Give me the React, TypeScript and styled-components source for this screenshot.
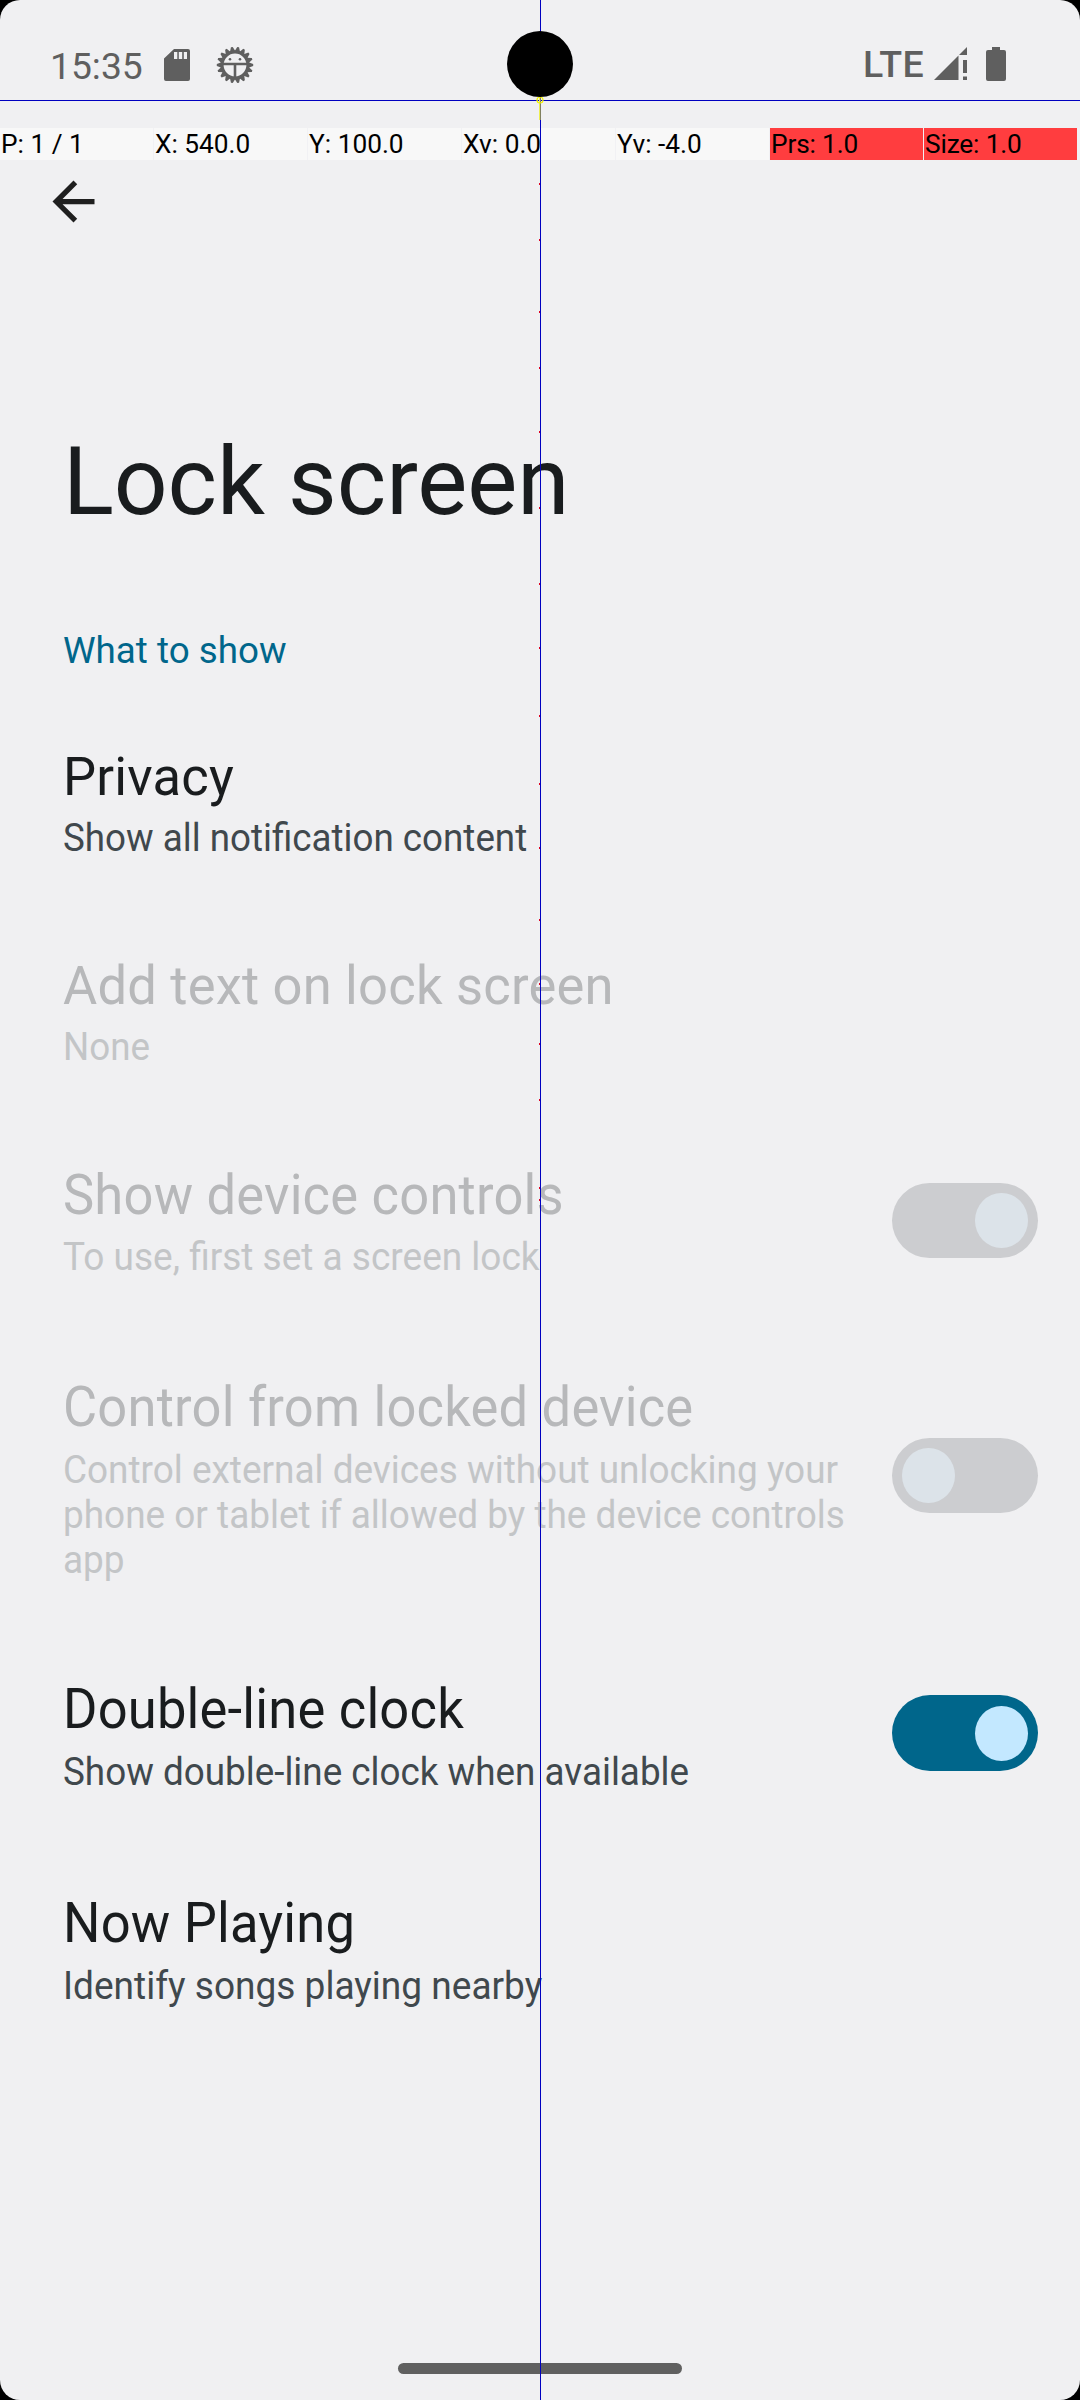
import React from 'react';
import styled, { createGlobalStyle } from 'styled-components';

const GlobalStyle = createGlobalStyle`
  html, body { margin: 0; padding: 0; background: #000; }
  * { box-sizing: border-box; }
`;

const Screen = styled.div`
  position: relative;
  width: 1080px;
  height: 2400px;
  overflow: hidden;
  display: flex;
  flex-direction: column;
  background: #f0f0f2;
  border-radius: 20px;
  font-family: Roboto, 'Noto Sans', sans-serif;
`;

const StatusBar = styled.header`
  display: flex;
  justify-content: space-between;
  height: 128px;
  flex: none;
  color: #5f5f5f;
`;

const StatusGroup = styled.div<{ $end?: boolean }>`
  display: flex;
  align-items: center;
  height: 132px;
  padding: ${p => (p.$end ? '0 74px 0 0' : '0 0 0 50px')};
`;

const Clock = styled.span`
  font-size: 37.25px;
  line-height: 44px;
  width: 111px;
`;

const Network = styled.span`
  font-size: 37.5px;
  line-height: 44px;
  font-weight: 500;
  letter-spacing: 0.4px;
  margin-top: -4px;
  margin-right: 10px;
`;

const Glyph = styled.svg<{ $gap?: number; $lift?: number }>`
  display: block;
  flex: none;
  margin-left: ${p => p.$gap ?? 0}px;
  margin-bottom: ${p => p.$lift ?? 0}px;
`;

const PointerBar = styled.div`
  display: flex;
  gap: 1px;
  height: 32px;
  flex: none;
  background: #f1f1f4;
`;

const PointerCell = styled.div<{ $alert?: boolean }>`
  width: 153px;
  flex: none;
  padding-left: 1px;
  background: ${p => (p.$alert ? '#ff3d3f' : '#f8f8f8')};
  color: #000;
  font-size: 26.25px;
  line-height: 32px;
  letter-spacing: ${p => (p.$alert ? '-0.15px' : 'normal')};
  white-space: nowrap;
`;

const Toolbar = styled.nav`
  display: flex;
  height: 250px;
  flex: none;
  padding: 10px 42px;
`;

const BackButton = styled.button`
  display: flex;
  align-items: center;
  justify-content: center;
  width: 63px;
  height: 63px;
  padding: 0;
  border: 0;
  background: none;
`;

const Title = styled.h1`
  margin: 0;
  padding-left: 63px;
  height: 216px;
  flex: none;
  font-size: 94.5px;
  line-height: 143px;
  letter-spacing: -0.1px;
  font-weight: 400;
  color: #191c1e;
`;

const Category = styled.h2`
  margin: 0;
  padding-left: 63px;
  height: 118px;
  flex: none;
  font-size: 36.75px;
  line-height: 49px;
  font-weight: 400;
  color: #00668b;
`;

const Preference = styled.section<{ $height: number; $disabled?: boolean }>`
  display: flex;
  justify-content: space-between;
  align-items: flex-start;
  height: ${p => p.$height}px;
  flex: none;
  padding: 0 42px 0 63px;
  color: ${p => (p.$disabled ? '#b7b8ba' : '#191c1e')};
`;

const PreferenceText = styled.div<{ $stretch: number }>`
  display: flex;
  flex-direction: column;
  transform: scaleY(${p => p.$stretch});
  transform-origin: 0 0;
`;

const Label = styled.div`
  font-size: 52.5px;
  line-height: 62px;
  letter-spacing: 0.2px;
  white-space: nowrap;
`;

const Summary = styled.div<{ $disabled?: boolean; $size?: number }>`
  font-size: ${p => p.$size ?? 36.75}px;
  line-height: 42.8px;
  white-space: pre;
  margin-top: 8.2px;
  color: ${p => (p.$disabled ? '#c3c5c7' : '#40484d')};
`;

const Switch = styled.div<{ $on: boolean; $disabled?: boolean; $top: number; $height: number }>`
  display: flex;
  align-items: center;
  justify-content: ${p => (p.$on ? 'flex-end' : 'flex-start')};
  width: 146px;
  height: ${p => p.$height}px;
  flex: none;
  margin-top: ${p => p.$top}px;
  padding: 0 10px;
  border-radius: 38px;
  background: ${p => (p.$disabled ? '#cccdd0' : '#00668b')};
`;

const Thumb = styled.span<{ $disabled?: boolean }>`
  width: 53px;
  height: 55px;
  border-radius: 50%;
  background: ${p => (p.$disabled ? '#dce3e9' : '#c3e8ff')};
`;

const HomeHandle = styled.div`
  width: 284px;
  height: 11px;
  margin: auto auto 26px;
  border-radius: 5.5px;
  background: #606060;
`;

const Overlay = styled.svg`
  position: absolute;
  inset: 0;
  pointer-events: none;
`;

type Item = {
  label: string;
  summary: string;
  height: number;
  stretch: number;
  size?: number;
  disabled?: boolean;
  toggle?: { on: boolean; top: number; height: number };
};

const items: Item[] = [
  { label: 'Privacy', summary: 'Show all notification content', height: 209, stretch: 1.035 },
  { label: 'Add text on lock screen', summary: 'None', height: 210, stretch: 1.035, disabled: true },
  {
    label: 'Show device controls',
    summary: 'To use, first set a screen lock',
    height: 212, stretch: 1.042, size: 37, disabled: true,
    toggle: { on: true, top: 20, height: 75 },
  },
  {
    label: 'Control from locked device',
    summary: 'Control external devices without unlocking your\nphone or tablet if allowed by the device controls\napp',
    height: 301, stretch: 1.045, size: 36.95, disabled: true,
    toggle: { on: false, top: 63.4, height: 75 },
  },
  {
    label: 'Double-line clock',
    summary: 'Show double-line clock when available',
    height: 214, stretch: 1.055, size: 36.85,
    toggle: { on: true, top: 19.4, height: 76 },
  },
  { label: 'Now Playing', summary: 'Identify songs playing nearby', height: 140, stretch: 1.06, size: 37.05 },
];

const readings = [
  { text: 'P: 1 / 1' },
  { text: 'X: 540.0' },
  { text: 'Y: 100.0' },
  { text: 'Xv: 0.0' },
  { text: 'Yv: -4.0' },
  { text: 'Prs: 1.0', alert: true },
  { text: 'Size: 1.0', alert: true },
];

const trace = [183, 239, 311, 367, 431, 507, 583, 647, 715, 783, 847, 919, 983, 1043, 1099, 1187, 1199];

const SdCard = () => (
  <Glyph $gap={3} $lift={2} width="26" height="32" viewBox="0 0 26 32">
    <path fillRule="evenodd" fill="currentColor" d="M10 0H24Q26 0 26 2V30Q26 32 24 32H2Q0 32 0 30V9.5ZM10 3V10H13.3V3ZM14.8 3V10H18.2V3ZM19.8 3V10H23V3Z" />
  </Glyph>
);

const teeth = Array.from({ length: 18 }, (_, i) => i * 20 + 10);

const Debug = () => (
  <Glyph $gap={26} $lift={2} width="38" height="38" viewBox="-19 -19 38 38">
    {teeth.map(a => (
      <path key={a} d="M-2.8 -13.5L-0.9 -18.2H0.9L2.8 -13.5Z" fill="currentColor" transform={`rotate(${a})`} />
    ))}
    <circle r="12.9" fill="none" stroke="currentColor" strokeWidth="3" />
    <path d="M-12 -1H12M0 -1V12" stroke="currentColor" strokeWidth="2.6" fill="none" />
    <circle cx="-5" cy="-5.8" r="1.3" fill="currentColor" />
    <circle cx="5" cy="-5.8" r="1.3" fill="currentColor" />
  </Glyph>
);

const Signal = () => (
  <Glyph $lift={4} width="34" height="34" viewBox="0 0 34 34">
    <path d="M0 33L24.5 8.5V33ZM33 0V8H25ZM29 13H33V26H29ZM29 29.5H33V33H29Z" fill="currentColor" />
  </Glyph>
);

const Battery = () => (
  <Glyph $gap={18} $lift={4} width="20" height="34" viewBox="0 0 20 34">
    <path d="M6 0H14V3H18Q20 3 20 5V32Q20 34 18 34H2Q0 34 0 32V5Q0 3 2 3H6Z" fill="currentColor" />
  </Glyph>
);

const PointerOverlay = () => (
  <Overlay width="1080" height="2400" viewBox="0 0 1080 2400">
    <g shapeRendering="crispEdges">
      <rect x="0" y="100" width="1080" height="1" fill="#0000c0" />
      <rect x="540" y="0" width="1" height="2400" fill="#0000c0" />
      {trace.map(y => (
        <rect key={y} x="539" y={y} width="1" height="2" fill="#e00020" />
      ))}
      <rect x="539" y="97" width="1" height="23" fill="#eeee50" />
      <rect x="540" y="97" width="1" height="23" fill="#808060" />
    </g>
    <circle cx="540" cy="100" r="3" fill="none" stroke="#f5f500" strokeWidth="1.2" />
    <circle cx="540" cy="64" r="33" fill="#000" />
  </Overlay>
);

export default function App() {
  return (
    <>
      <GlobalStyle />
      <Screen>
        <StatusBar>
          <StatusGroup>
            <Clock>15:35</Clock>
            <SdCard />
            <Debug />
          </StatusGroup>
          <StatusGroup $end>
            <Network>LTE</Network>
            <Signal />
            <Battery />
          </StatusGroup>
        </StatusBar>
        <PointerBar>
          {readings.map(r => (
            <PointerCell key={r.text} $alert={r.alert}>{r.text}</PointerCell>
          ))}
        </PointerBar>
        <Toolbar>
          <BackButton aria-label="Back">
            <svg width="63" height="63" viewBox="0 0 24 24">
              <path d="M20 11H7.83l5.59-5.59L12 4l-8 8 8 8 1.41-1.41L7.83 13H20v-2z" fill="#1f1f1f" />
            </svg>
          </BackButton>
        </Toolbar>
        <Title>Lock screen</Title>
        <Category>What to show</Category>
        {items.map(item => (
          <Preference key={item.label} $height={item.height} $disabled={item.disabled}>
            <PreferenceText $stretch={item.stretch}>
              <Label>{item.label}</Label>
              <Summary $disabled={item.disabled} $size={item.size}>{item.summary}</Summary>
            </PreferenceText>
            {item.toggle && (
              <Switch $on={item.toggle.on} $disabled={item.disabled} $top={item.toggle.top} $height={item.toggle.height}>
                <Thumb $disabled={item.disabled} />
              </Switch>
            )}
          </Preference>
        ))}
        <HomeHandle />
        <PointerOverlay />
      </Screen>
    </>
  );
}
